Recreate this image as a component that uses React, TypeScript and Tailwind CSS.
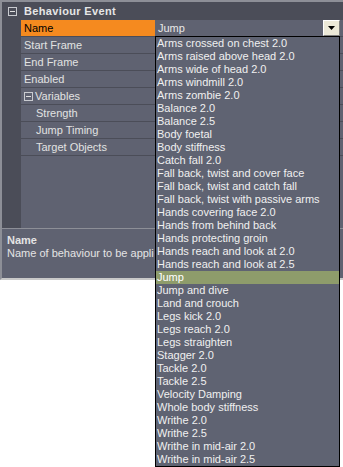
import React from "react";

const items = [
  "Arms crossed on chest 2.0",
  "Arms raised above head 2.0",
  "Arms wide of head 2.0",
  "Arms windmill 2.0",
  "Arms zombie 2.0",
  "Balance 2.0",
  "Balance 2.5",
  "Body foetal",
  "Body stiffness",
  "Catch fall 2.0",
  "Fall back, twist and cover face",
  "Fall back, twist and catch fall",
  "Fall back, twist with passive arms",
  "Hands covering face 2.0",
  "Hands from behind back",
  "Hands protecting groin",
  "Hands reach and look at 2.0",
  "Hands reach and look at 2.5",
  "Jump",
  "Jump and dive",
  "Land and crouch",
  "Legs kick 2.0",
  "Legs reach 2.0",
  "Legs straighten",
  "Stagger 2.0",
  "Tackle 2.0",
  "Tackle 2.5",
  "Velocity Damping",
  "Whole body stiffness",
  "Writhe 2.0",
  "Writhe 2.5",
  "Writhe in mid-air 2.0",
  "Writhe in mid-air 2.5",
];

function MinusBox() {
  return (
    <div className="flex h-[9px] w-[9px] items-center justify-center border border-[#c9cbd0]">
      <div className="h-[1px] w-[5px] bg-[#e0e0e0]" />
    </div>
  );
}

function Row({ label, indent = 3, children }: { label?: React.ReactNode; indent?: number; children?: React.ReactNode }) {
  return (
    <div className="flex h-[17px] border-b border-[#4b4d58]">
      <div className="flex w-[134px] items-center text-[#e2e2e2]" style={{ paddingLeft: indent }}>
        {label}
      </div>
      <div className="flex-1 border-l border-[#4b4d58]">{children}</div>
    </div>
  );
}

export default function App() {
  return (
    <div className="relative h-[467px] w-[343px] overflow-hidden bg-white font-['Liberation_Sans',Arial,sans-serif] text-[11px] leading-[13px]">
      <div className="flex h-[280px] flex-col border-b-2 border-l-2 border-t-2 border-[#8d8f97] border-b-[#c9c9c9] bg-[#5f6271]">
        {/* category header */}
        <div className="flex h-[18px] shrink-0 items-center bg-[#4b4d58] pl-[6px]">
          <MinusBox />
          <span className="ml-[7px] font-bold tracking-[0.35px] text-[#e6e6e6]">Behaviour Event</span>
        </div>
        {/* grid */}
        <div className="flex h-[208px] shrink-0">
          <div className="w-[19px] bg-[#4b4d58]" />
          <div className="flex flex-1 flex-col">
            <div className="flex h-[17px] border-b border-[#4b4d58]">
              <div className="flex w-[134px] items-center bg-[#f58a1f] pl-[3px] text-black">Name</div>
              <div className="flex flex-1 items-center justify-between pl-[3px] pr-[3px] text-[#e8e8e8]">
                <span>Jump</span>
                <div className="flex h-[16px] w-[17px] items-center justify-center border border-b-[#808080] border-l-[#ffffff] border-r-[#808080] border-t-[#ffffff] bg-[#ece9d8]">
                  <svg width="7" height="4" viewBox="0 0 7 4">
                    <path d="M0 0H7L3.5 4Z" fill="#000" />
                  </svg>
                </div>
              </div>
            </div>
            <Row label="Start Frame" />
            <Row label="End Frame" />
            <Row label="Enabled" />
            <Row
              label={
                <div className="flex items-center">
                  <MinusBox />
                  <span className="ml-[2px]">Variables</span>
                </div>
              }
            />
            <Row label="Strength" indent={15} />
            <Row label="Jump Timing" indent={15} />
            <Row label="Target Objects" indent={15} />
          </div>
        </div>
        {/* description */}
        <div className="flex-1 border-t border-[#8d8f97] pl-[5px] pt-[5px] text-[#e4e4e4]">
          <div className="font-bold">Name</div>
          <div className="w-[147px] overflow-hidden whitespace-nowrap">Name of behaviour to be applie</div>
        </div>
      </div>

      {/* dropdown list */}
      <div className="absolute left-[155px] top-[36px] w-[185px] border border-black bg-[#5f6372] text-[#f0f0f0]">
        {items.map((it, i) => (
          <div
            key={i}
            className={`h-[13px] whitespace-nowrap pl-[1px] leading-[13px] ${it === "Jump" ? "bg-[#8e9c6b] text-white" : ""}`}
          >
            {it}
          </div>
        ))}
      </div>
    </div>
  );
}
